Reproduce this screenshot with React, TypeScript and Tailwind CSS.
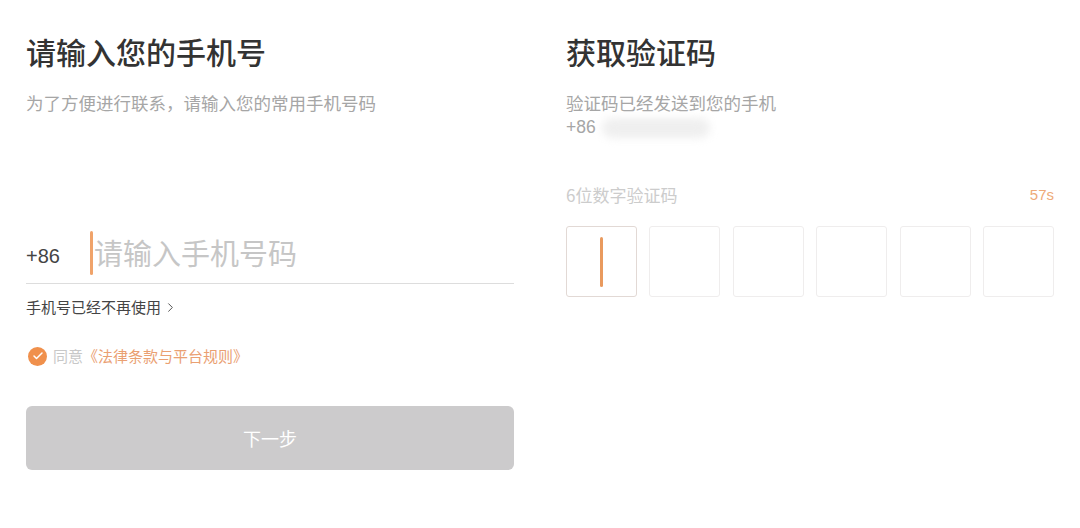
import { Check, ChevronRight } from "lucide-react"

const font = { fontFamily: '"Noto Sans CJK SC", "Noto Sans", sans-serif' }

function PhoneStep() {
  return (
    <div className="flex flex-col w-[488px]">
      <h1 className="text-[30px] leading-[40px] font-medium text-[#333333] mt-[31px]">请输入您的手机号</h1>
      <p className="text-[17.5px] leading-[26px] text-[#a6a6a6] mt-[19px]">为了方便进行联系，请输入您的常用手机号码</p>

      <div className="flex items-center mt-[112px] h-[56px] border-b border-[#dddddd]">
        <span className="text-[20px] text-[#444444] w-[64px]" style={{ fontFamily: '"Liberation Sans", sans-serif' }}>+86</span>
        <span className="w-[3px] h-[44px] bg-[#f0a36a] rounded-sm mb-[6px]" />
        <span className="text-[29px] text-[#c6c6c6] mb-[6px] ml-[1px]">请输入手机号码</span>
      </div>

      <button className="flex items-center self-start mt-[12px] text-[15px] leading-[22px] text-[#444444]">
        手机号已经不再使用
        <ChevronRight size={15} strokeWidth={1.6} className="ml-[2px] text-[#555555]" />
      </button>

      <div className="flex items-center mt-[26px] h-[24px] pl-[2px]">
        <span className="flex items-center justify-center w-[19px] h-[19px] rounded-full bg-[#f0904c]">
          <Check size={12} strokeWidth={3} className="text-white" />
        </span>
        <span className="ml-[6px] text-[15px] text-[#c8c8c8]">同意</span>
        <span className="text-[15px] text-[#eaa072]">《法律条款与平台规则》</span>
      </div>

      <button className="mt-[38px] h-[64px] rounded-[6px] bg-[#cccbcc] text-white text-[18px]">下一步</button>
    </div>
  )
}

function CodeStep() {
  const boxes = [0, 1, 2, 3, 4, 5]
  return (
    <div className="flex flex-col w-[488px]">
      <h1 className="text-[30px] leading-[40px] font-medium text-[#333333] mt-[31px]">获取验证码</h1>
      <p className="text-[17.5px] leading-[25px] text-[#a6a6a6] mt-[19px]">验证码已经发送到您的手机</p>
      <div className="flex items-center h-[25px]">
        <span className="text-[17.5px] text-[#a6a6a6]" style={{ fontFamily: '"Liberation Sans", sans-serif' }}>+86</span>
        <span className="ml-[6px] w-[108px] h-[20px] rounded-full bg-[#efefef] blur-[4px]" />
      </div>

      <div className="flex items-center justify-between mt-[42px] h-[26px]">
        <span className="text-[17px] text-[#cccccc]">6位数字验证码</span>
        <span className="text-[15px] text-[#eeaa78]" style={{ fontFamily: '"Liberation Sans", sans-serif' }}>57s</span>
      </div>

      <div className="flex justify-between mt-[18px]">
        {boxes.map(i => (
          <div
            key={i}
            className={
              i === 0
                ? "w-[71px] h-[71px] rounded-[3px] border border-[#e2d9d5] flex items-center justify-center"
                : "w-[71px] h-[71px] rounded-[3px] border border-[#efeded]"
            }
          >
            {i === 0 && <span className="w-[3px] h-[50px] rounded-sm bg-[#e99a5e]" />}
          </div>
        ))}
      </div>
    </div>
  )
}

export default function App() {
  return (
    <div className="w-[1080px] h-[528px] bg-white flex justify-between px-[26px] overflow-hidden" style={font}>
      <PhoneStep />
      <CodeStep />
    </div>
  )
}
